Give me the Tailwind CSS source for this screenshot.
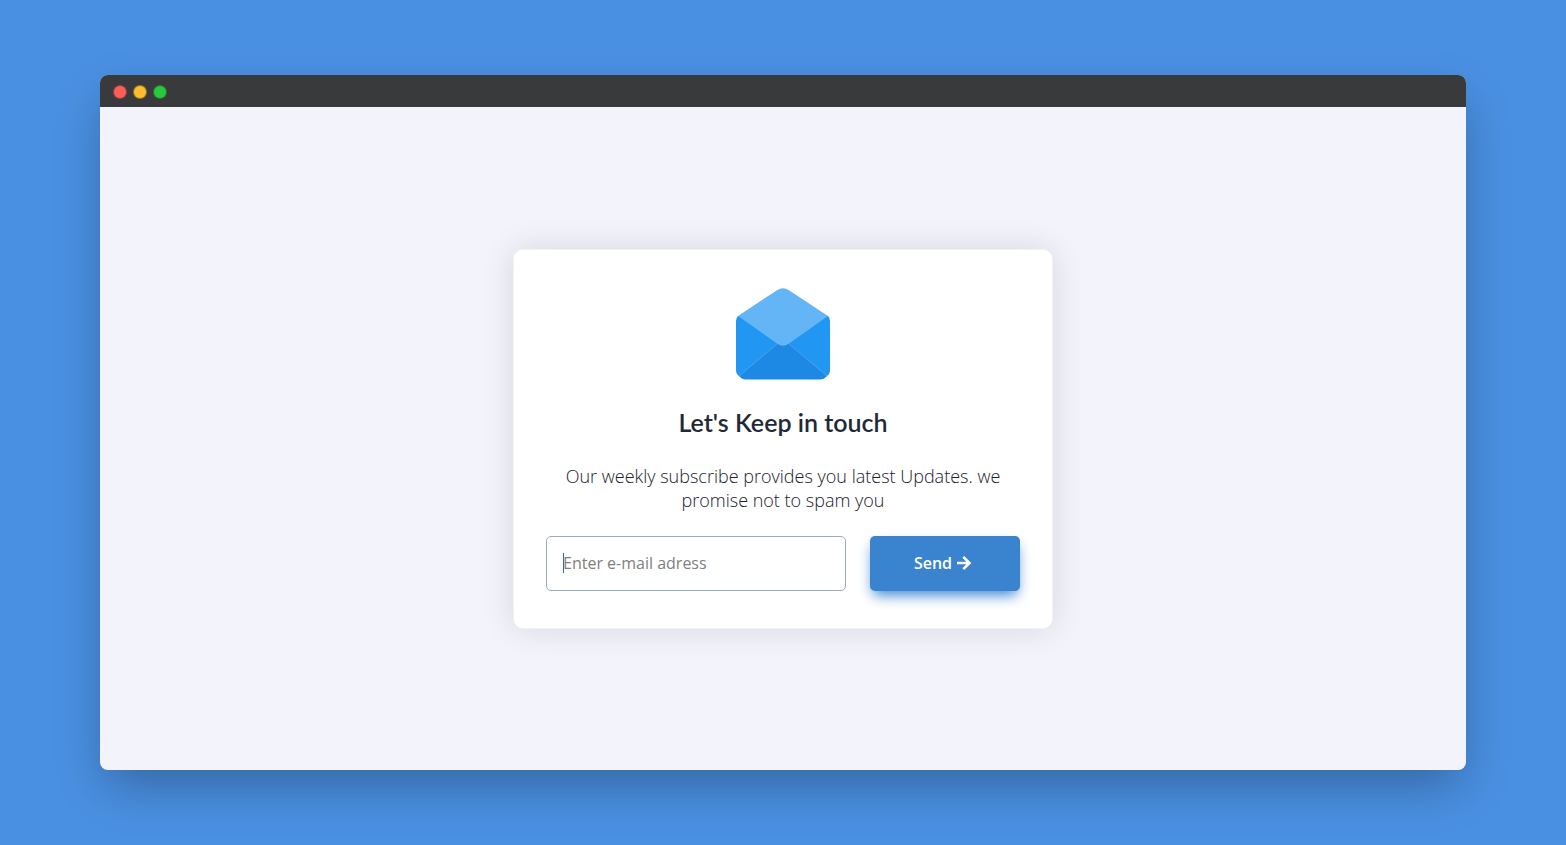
<!DOCTYPE html>
<html lang="en">
<head>
<meta charset="utf-8">
<meta name="viewport" content="width=device-width, initial-scale=1">
<title>Newsletter</title>
<script src="https://cdn.jsdelivr.net/npm/@tailwindcss/browser@4"></script>
</head>
<body class="flex min-h-screen bg-[#4a90e2] px-6 py-[75px] font-['Open_Sans','Lato',sans-serif] lg:px-[100px]">
<div class="flex flex-1 flex-col overflow-hidden rounded-lg bg-[#f3f3fc] shadow-[0_20px_50px_-6px_rgba(0,0,0,0.3)]">
  <header class="flex h-8 items-center gap-2 bg-[#383a3b] px-3.5 pt-0.5">
    <span class="size-3 rounded-full bg-[#ff5f56] ring-1 ring-[#e0443e]/60"></span>
    <span class="size-3 rounded-full bg-[#ffbd2e] ring-1 ring-[#dea123]/60"></span>
    <span class="size-3 rounded-full bg-[#27c93f] ring-1 ring-[#1aab29]/60"></span>
  </header>
  <main class="flex flex-1 items-center justify-center p-4">
    <section class="flex w-full max-w-[540px] flex-col items-center rounded-[10px] border border-[#f2f2f5] bg-white px-8 pt-[38px] pb-[37px] text-center text-[#1a202c] shadow-[0_0_32px_rgba(0,0,0,0.12)]">
      <svg class="h-[92px] w-[94px]" viewBox="0 0 94 92" aria-hidden="true">
        <path fill="#2196f3" d="M0 33Q0 30 2 28H92Q94 30 94 33V82Q94 86 91 88L47 62L3 88Q0 86 0 82Z"/>
        <path fill="#1e88e5" d="M47 50L3 88Q6 91.500 10 91.500H84Q88 91.500 91 88Z"/>
        <path fill="none" stroke="#64b5f6" stroke-width=".6" d="M3 88L42 55M91 88L52 55"/>
        <path fill="#64b5f6" d="M2 28L41 2.200Q47-1.600 53 2.200L92 28L53 55.500Q47 60 41 55.500Z"/>
      </svg>
      <h1 class="mt-6 font-['Lato',sans-serif] text-[25px] leading-9 font-semibold text-[#1f2937]">Let's Keep in touch</h1>
      <p class="mt-6 text-lg leading-6 font-light">Our weekly subscribe provides you latest Updates. we promise not to spam you</p>
      <form class="mt-6 grid w-full grid-cols-[2fr_1fr] gap-6" onsubmit="return false">
        <div class="relative">
          <input type="email" aria-label="E-mail address" placeholder="Enter e-mail adress" class="block h-[55px] w-full rounded-[5px] border border-[#9badc0] bg-white px-4 text-base text-[#2d3748] outline-none placeholder:text-[#808080]">
          <span class="absolute top-[17px] left-[17px] h-5 w-px bg-[#2b6cb0]" aria-hidden="true"></span>
        </div>
        <button type="submit" class="flex h-[55px] items-center justify-center gap-1 rounded-[5px] bg-[#3a83cf] pr-1 text-base font-semibold text-white shadow-[0_7px_14px_-3px_#3a83cf]">Send
          <svg class="size-4" viewBox="0 0 16 16" fill="none" stroke="currentColor" stroke-width="2.600" stroke-linejoin="miter" aria-hidden="true"><path d="M1 8H13M7.300 1.800L13.500 8L7.300 14.200"/></svg>
        </button>
      </form>
    </section>
  </main>
</div>
</body>
</html>
